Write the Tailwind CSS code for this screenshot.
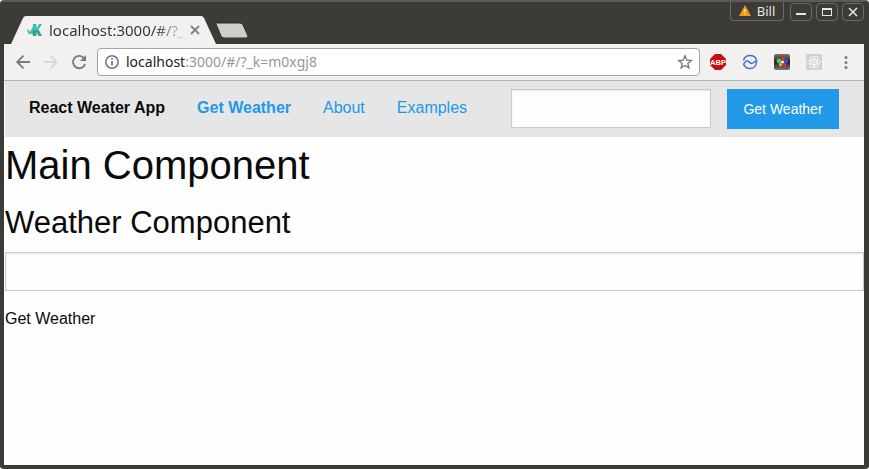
<!DOCTYPE html>
<html lang="en">
<head>
<meta charset="utf-8">
<meta name="viewport" content="width=device-width, initial-scale=1">
<title>React Weather App</title>
<script src="https://cdn.jsdelivr.net/npm/@tailwindcss/browser@4"></script>
</head>
<body class="bg-white font-['Liberation_Sans',Arial,sans-serif] text-[#0a0a0a]">
<div class="flex min-h-screen flex-col rounded border-t-2 border-r-5 border-b-4 border-l-4 border-t-[#5c5b59] border-r-[#3c3b37] border-b-[#3c3b37] border-l-[#3c3b37] bg-[#3c3b37]">
  <!-- Title bar with tab strip and window controls -->
  <header class="flex h-[42px] justify-between font-['Noto_Sans','Open_Sans',sans-serif]">
    <div class="flex items-end pl-[7px]">
      <div class="relative flex h-7 w-[206px] items-center pr-[16px] pl-[15px]">
        <svg class="absolute inset-0 h-full w-full" viewBox="0 0 206 28" preserveAspectRatio="none" aria-hidden="true"><path d="M0 28 L12 2 Q13 0 15 0 H190 Q192 0 193 2 L205 28Z" fill="#f2f1f0"/></svg>
        <svg class="relative h-4 w-4 shrink-0" viewBox="0 0 16 16" fill="#3cbfae" aria-hidden="true"><path d="M0 6.500L1.500 8.500L3 7.500L4 10L7 4.500V13L4.500 11.500L3 12.500z"/><path d="M7 2h3.500v4.500L13 2h3l-3.500 5.500H7z"/><path d="M7 7.500h5.500L16 14h-3.500l-2-4V14H7z" fill="#2fa496"/></svg>
        <span class="relative ml-[7px] w-[138px] shrink-0 bg-linear-to-r from-[#333] from-75% to-[#f2f1f0] bg-clip-text text-[15px] leading-6 whitespace-nowrap text-transparent">localhost:3000/#/?_</span>
        <button class="relative flex h-4 w-4 shrink-0 items-center justify-center" aria-label="Close tab"><svg class="h-2.5 w-2.5" viewBox="0 0 10 10" stroke="#828180" stroke-width="1.800"><path d="M1 1l8 8M9 1l-8 8"/></svg></button>
      </div>
      <button class="-ml-0.5 mb-1.5 h-4 w-[34px]" aria-label="New tab"><svg viewBox="0 0 34 16" class="h-4 w-[34px]"><path d="M1 2Q0 1 2 1H25Q27 1 28 3L33 14Q33 16 31 16H9Q7 16 6 14Z" fill="#cfcecd" stroke="#2f2e2b"/></svg></button>
    </div>
    <div class="flex items-start gap-1.5 text-[#e6e5e3]">
      <button class="flex h-[19px] w-[54px] items-center justify-center gap-1.5 rounded-b border border-t-0 border-[#6b6a67] text-[13px] leading-4"><svg class="h-3 w-3" viewBox="0 0 12 12" aria-hidden="true"><path d="M6 0L12 11H0Z" fill="#f39a12"/><path d="M6 4v3M6 8v1.500" stroke="#fff3d8" stroke-width="1.300"/></svg>Bill</button>
      <div class="flex gap-1 pt-px">
        <button class="flex h-[18px] w-[22px] items-center justify-center rounded-sm border border-[#6b6a67]" aria-label="Minimize"><svg class="h-3 w-3" viewBox="0 0 12 12"><path d="M1 8h10" stroke="#e6e5e3" stroke-width="2"/></svg></button>
        <button class="flex h-[18px] w-[22px] items-center justify-center rounded-sm border border-[#6b6a67]" aria-label="Maximize"><svg class="h-3 w-3" viewBox="0 0 12 12" fill="none" stroke="#e6e5e3"><rect x="1.500" y="2.500" width="9" height="7"/><path d="M1 3h10" stroke-width="2"/></svg></button>
        <button class="flex h-[18px] w-[22px] items-center justify-center rounded-sm border border-[#6b6a67]" aria-label="Close window"><svg class="h-3 w-3" viewBox="0 0 12 12" stroke="#e6e5e3" stroke-width="1.600"><path d="M2 2l8 8M10 2l-8 8"/></svg></button>
      </div>
    </div>
  </header>

  <!-- Browser toolbar -->
  <div class="flex h-[37px] items-center border-b border-[#b4b3b2] bg-[#f2f1f0] pr-2.5 pl-[11px] font-['Noto_Sans','Open_Sans',sans-serif]">
    <div class="flex gap-3">
      <button aria-label="Back"><svg class="h-4 w-4" viewBox="0 0 16 16" fill="none" stroke="#7b7a79" stroke-width="1.800"><path d="M15 8H2.500M8.500 1.700L2.200 8l6.300 6.300"/></svg></button>
      <button aria-label="Forward"><svg class="h-4 w-4" viewBox="0 0 16 16" fill="none" stroke="#dad9d8" stroke-width="1.800"><path d="M.5 8h13M7.500 1.700L13.800 8l-6.300 6.300"/></svg></button>
      <button aria-label="Reload"><svg class="h-4 w-4" viewBox="0 0 16 16"><path d="M13.300 4.500A6.200 6.200 0 1 0 14.100 10" fill="none" stroke="#7b7a79" stroke-width="1.900"/><path d="M15 1v6H9z" fill="#7b7a79"/></svg></button>
    </div>
    <div class="ml-2.5 flex h-7 flex-1 items-center rounded-sm border border-[#a5a4a3] bg-white px-1.5">
      <svg class="h-4 w-4" viewBox="0 0 16 16" fill="none" stroke="#747474" aria-hidden="true"><circle cx="8" cy="8" r="6.200" stroke-width="1.500"/><path d="M8 7v4.500M8 4v1.800" stroke-width="1.700"/></svg>
      <a href="#" class="ml-1.5 flex-1 text-[14px] leading-5 text-[#969696]"><span class="text-[#222]">localhost</span>:3000/#/?_k=m0xgj8</a>
      <button aria-label="Bookmark"><svg class="h-4 w-4" viewBox="0 0 16 16" fill="none" stroke="#747474" stroke-width="1.300"><path d="M8 1.800l1.800 4.300 4.500.4-3.500 3 1.100 4.400L8 11.500l-3.900 2.400 1.100-4.400-3.500-3 4.500-.4z"/></svg></button>
    </div>
    <div class="ml-2.5 flex gap-4">
      <button aria-label="Adblock Plus"><svg class="h-4 w-4" viewBox="0 0 16 16"><path d="M5 0h6l5 5v6l-5 5H5l-5-5V5z" fill="#c90b0b"/><text x="8" y="10.800" text-anchor="middle" font-family="Liberation Sans" font-weight="bold" font-size="7.500" fill="#fff">ABP</text></svg></button>
      <button aria-label="Page monitor"><svg class="h-4 w-4" viewBox="0 0 16 16" fill="none" stroke="#416fe0" stroke-width="1.500"><path d="M1.500 6.500C2.500 3 5 1.500 8 1.500s5.500 1.500 6.500 4.500M1.500 9.800C2.500 13 5 14.500 8 14.500s6-2 6.500-6.500M1.500 9.800C3.500 8.500 4 6.500 5.500 6.800S8 9.500 9.700 9.500 12 7 15.500 6.800"/></svg></button>
      <button aria-label="Color tool"><svg class="h-4 w-4" viewBox="0 0 16 16"><defs><linearGradient id="g" x2="0" y2="1"><stop stop-color="#777"/><stop offset=".5" stop-color="#222"/><stop offset="1" stop-color="#777"/></linearGradient></defs><rect width="16" height="16" rx="2" fill="url(#g)"/><circle cx="9" cy="4.800" r="2" fill="#f22"/><circle cx="5" cy="7" r="2.400" fill="#57ca35"/><circle cx="12" cy="7.200" r="2" fill="#2855e8"/><circle cx="6.500" cy="10.700" r="1.800" fill="#d9af4c"/><circle cx="10.500" cy="11" r="1.900" fill="#e02e49"/><circle cx="8.500" cy="8" r="1.500" fill="#fff"/></svg></button>
      <button aria-label="React Developer Tools"><svg class="h-4 w-4" viewBox="0 0 16 16" fill="none" stroke="#f5f5f5"><rect width="16" height="16" fill="#d0d0d0" stroke="none"/><ellipse cx="8" cy="8" rx="6.500" ry="2.500"/><ellipse cx="8" cy="8" rx="6.500" ry="2.500" transform="rotate(60 8 8)"/><ellipse cx="8" cy="8" rx="6.500" ry="2.500" transform="rotate(120 8 8)"/><circle cx="8" cy="8" r="1" fill="#f5f5f5"/></svg></button>
      <button aria-label="Menu"><svg class="h-4 w-4" viewBox="0 0 16 16" fill="#7b7a79"><circle cx="8" cy="3.500" r="1.500"/><circle cx="8" cy="8.500" r="1.500"/><circle cx="8" cy="13.500" r="1.500"/></svg></button>
    </div>
  </div>

  <!-- Page -->
  <div class="flex-1 border-l border-white bg-[#fefefe]">
    <nav class="flex h-14 items-start justify-between bg-[#e6e6e6] pt-2 pr-[25px] pl-6 text-[16px] leading-6">
      <ul class="flex gap-8 pt-[7px] whitespace-nowrap">
        <li class="font-bold">React Weater App</li>
        <li><a href="#/" class="font-bold text-[#2199e8]">Get Weather</a></li>
        <li><a href="#/about" class="text-[#2199e8]">About</a></li>
        <li><a href="#/examples" class="text-[#2199e8]">Examples</a></li>
      </ul>
      <form class="flex gap-4">
        <input type="search" aria-label="Search weather by city" class="h-[39px] w-[200px] border border-[#cacaca] bg-[#fefefe] px-2 shadow-[inset_0_1px_2px_rgba(10,10,10,0.1)]">
        <button type="button" class="h-10 w-28 bg-[#2199e8] text-[14px] text-[#fefefe]">Get Weather</button>
      </form>
    </nav>
    <main>
      <h1 class="mb-2 text-[40px] leading-14">Main Component</h1>
      <h2 class="mb-2 text-[31px] leading-[43px]">Weather Component</h2>
      <form>
        <input type="text" aria-label="City" class="mb-4 block h-[39px] w-full border border-[#cacaca] bg-[#fefefe] px-2 shadow-[inset_0_1px_2px_rgba(10,10,10,0.1)]">
        <button type="button" class="text-[16px] leading-6">Get Weather</button>
      </form>
    </main>
  </div>
</div>
</body>
</html>
